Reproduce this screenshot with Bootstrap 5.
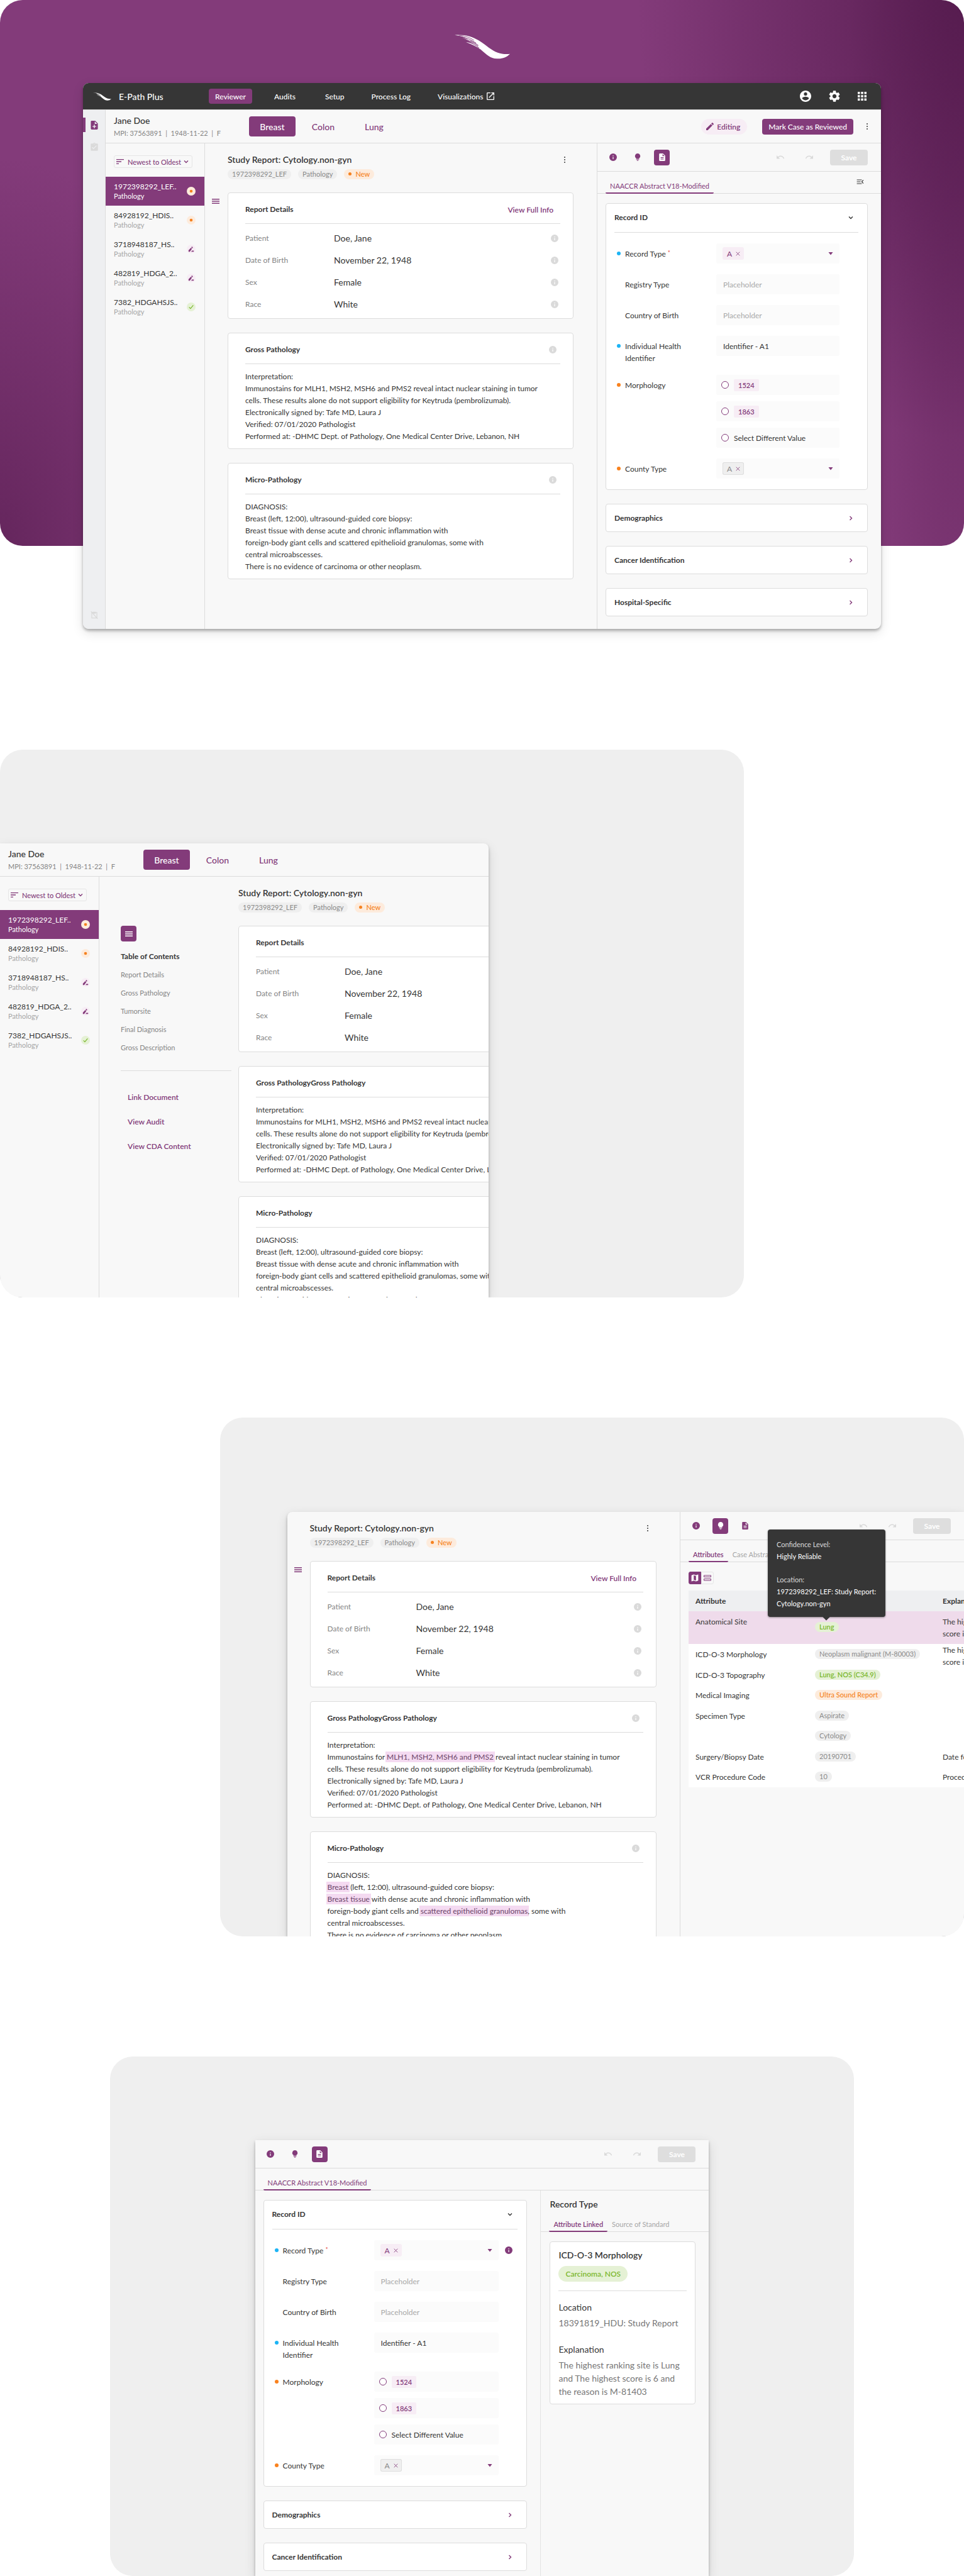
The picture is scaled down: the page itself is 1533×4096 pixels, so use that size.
<!DOCTYPE html>
<html lang="en">
<head>
<meta charset="utf-8">
<meta name="viewport" content="width=device-width, initial-scale=1">
<title>E-Path Plus</title>
<link href="https://cdn.jsdelivr.net/npm/bootstrap@5.3.0/dist/css/bootstrap.min.css" rel="stylesheet">
<style>
:root{--plum:#833b7a;--ink:#363636;--dim:#858585;--faint:#a6a6a6;--rule:#dcdcdc;--panel:#f8f8f8;--rail:#eeeff1;--blush:#f7edf5}
body{font-family:Lato,"Open Sans",sans-serif;font-size:12px;line-height:19px;color:var(--ink);background:#fff;overflow-x:hidden}
svg{fill:currentColor;display:block;flex:none}
button{font:inherit}
.i10{width:10px;height:10px}.i12{width:12px;height:12px}.i14{width:14px;height:14px}
.plum{color:var(--plum)}.dim{color:#666}.pale{color:#dadada}
.bare{background:none;border:0;padding:0;color:inherit;display:inline-flex;align-items:center;justify-content:center}

/* stages */
.hero{height:868px;padding:0 132px;border-radius:36px;background:radial-gradient(520px 700px at 100% 0,rgba(85,27,78,.9),rgba(85,27,78,0)),radial-gradient(180px 1400px at 100% 0,rgba(85,27,78,.6),rgba(85,27,78,0)),radial-gradient(350px 620px at 0 100%,#65265d,rgba(101,38,93,0)),var(--plum)}
.hero-mark{height:132px;padding-top:55px;--slit:var(--plum)}
.hero-mark svg{width:88px;height:39px}
.stage{width:77.2%;background:#efefef;border-radius:36px;overflow:hidden}
.stage-toc{margin-top:324px;height:871px;padding-top:149px}
.stage-attr{margin-top:191px;height:825px;padding:150px 0 0 107px}
.stage-link{margin-top:191px;height:826px;padding-top:133px}
.win{background:var(--panel);box-shadow:0 3px 4px rgba(0,0,0,.28),0 6px 18px rgba(0,0,0,.12)}
.win-main{border-radius:9px}
.win-toc{width:777px;height:100%;border-radius:0 8px 0 0;overflow:hidden}
.win-attr{height:100%;border-radius:8px 0 0 0}
.win-link{width:61%;height:100%}

/* top bar */
.topbar{height:42px;background:#363636;color:#fff;border-radius:9px 9px 0 0;padding:0 23px 0 16px;--slit:#363636}
.topbar .swoosh{width:29px;height:13px}
.brandname{font-size:14px;font-weight:500;margin-left:12px;width:143px}
.topnav{gap:35px}
.topnav a{color:#fff;text-decoration:none;font-weight:500;height:24px;display:flex;align-items:center;gap:6px;padding:0 4px}
.topnav a.on{background:var(--plum);border-radius:4px;padding:0 10px}

/* patient bar */
.patient{height:53px;border-bottom:1px solid var(--rule);padding:0 20px 0 13px}
.patient.first{height:54px;border-top:1px solid var(--rule)}
.who{width:215px}
.who h2{font-size:14px;font-weight:500;line-height:20px;margin:0}
.who p{font-size:11px;line-height:19px;margin:0;color:var(--dim)}
.sites{gap:7px}
.sites button{width:74px;height:32px;border:0;border-radius:4px;background:none;color:var(--plum);font-size:14px;font-weight:500}
.sites button.on{background:var(--plum);color:#fff}
.editing{height:25px;border-radius:13px;background:var(--blush);color:var(--plum);padding:0 11px 0 8px;gap:5px;font-weight:600}
.solid{height:25px;border:0;border-radius:4px;background:var(--plum);color:#fff;font-weight:500;padding:0 10px}

/* rail and study list */
.rail{width:36px;background:var(--rail);border-right:1px solid var(--rule);border-top:1px solid var(--rule);border-radius:0 0 0 9px;padding:12px 0 11px}
.rail .spot{width:100%;height:23px;display:flex;align-items:center;justify-content:center;color:#dadada;border:0;background:none;padding:0}
.rail .spot.on{color:var(--plum);border-left:4px solid var(--plum);padding-right:4px}
.studies{width:158px;border-right:1px solid var(--rule);padding-top:19px;flex:none}
.sorter{position:relative;width:125px;margin:0 0 14px 13px;color:var(--plum)}
.sorter select{appearance:none;width:100%;height:20px;border:1px solid #e6e6e6;border-radius:3px;background:transparent;color:var(--plum);font-size:11px;font-weight:500;padding:0 0 0 21px}
.sorter svg{position:absolute;top:4px;pointer-events:none}
.sorter svg:first-child{left:4px}.sorter svg:last-child{right:5px;top:5px}
.study{height:46px;padding:7px 14px 0 13px;color:var(--ink);text-decoration:none;display:flex;justify-content:space-between}
.study b{display:block;font-weight:400;line-height:17px}
.study small{display:block;font-size:11px;line-height:14px;color:var(--faint)}
.study.on{background:var(--plum);color:#fff}.study.on small{color:#fff}
.dotmark{width:14px;height:14px;border-radius:50%;margin-top:9px;display:flex;align-items:center;justify-content:center;background:#fdebdc;color:#f58220;flex:none}
.dotmark.pen{background:var(--blush);color:var(--plum)}
.dotmark.ok{background:#e5f1d5;color:#7cb82f}

/* report */
.gutter{width:36px;padding:84px 0 0 11px;flex:none}
.report{flex:1 1 0;min-width:0;padding:16px 37px 79px 0}
.report.wide{flex:0 0 586px}
.report h1{font-size:14px;font-weight:600;line-height:20px;margin:0}
.tags{gap:11px;margin:5px 0 21px}
.tag{display:inline-block;height:16px;line-height:16px;border-radius:8px;padding:0 7px;font-size:11px;background:#efefef;color:#8a8a8a;white-space:nowrap;font-weight:400}
.tag.new,.tag.warn{background:#fdebdc;color:#f58220;font-weight:500}
.tag.new::before{content:"";display:inline-block;width:5px;height:5px;border-radius:50%;background:#f58220;margin-right:6px;vertical-align:2px}
.tag.good{background:#e5f1d5;color:#7cb82f;font-weight:600}
.sheet{background:#fff;border:1px solid var(--rule);border-radius:4px;padding:0 20px 0 27px;margin-bottom:22px}
.sheet-head{height:49px;padding:4px 6px 0 0;border-bottom:1px solid var(--rule);display:flex;align-items:center;justify-content:space-between}
.sheet-head h3{font-size:12px;font-weight:700;line-height:20px;margin:0}
.sheet-head a{color:var(--plum);font-weight:600;text-decoration:none;margin-right:5px}
.facts{margin:0;padding:5px 0}
.facts div{display:flex;align-items:center;height:35px;padding-right:3px}
.facts dt{font-weight:400;width:141px;color:var(--dim)}
.facts dd{font-size:14px;margin:0;flex:1}
.prose{margin:0;padding:10px 0;white-space:nowrap}
.hl{background:#f4daf1;color:#6b4468;padding:1px 2px;margin:0 -2px}

/* contents list */
.toc{width:221px;padding:78px 11px 0 34px;flex:none}
.toc-btn{width:25px;height:25px;border:0;border-radius:4px;background:var(--plum);color:#fff;padding:0;display:flex;align-items:center;justify-content:center}
.toc h3{font-size:12px;font-weight:700;line-height:20px;margin:14px 0 4px}
.toc a{display:block;text-decoration:none;font-size:11px;line-height:29px;color:var(--dim)}
.toc hr{margin:22px 0;border:0;border-top:1px solid var(--rule);opacity:1}
.toc a.act{color:var(--plum);font-size:12px;font-weight:600;line-height:39px;padding-left:11px}

/* abstract panel */
.side{flex:0 0 452px;min-width:0;border-left:1px solid var(--rule)}
.tools{height:45px;border-bottom:1px solid var(--rule);padding:0 21px 0 12px;color:var(--plum)}
.toolset{gap:14px}
.tool{width:25px;height:25px;border:0;border-radius:4px;background:none;color:var(--plum);padding:0;display:flex;align-items:center;justify-content:center}
.tool.on{background:var(--plum);color:#fff}
.ghost{color:#dadada;width:14px;margin-right:32px}
.ghost.last{margin-right:26px}
.save{width:60px;height:25px;border:0;border-radius:4px;background:#dedede;color:#fff;font-weight:700}
.tabrow{height:35px;border-bottom:1px solid var(--rule);padding:0 27px 0 13px}
.tabrow a{height:26px;line-height:27px;padding:0 7px;margin-bottom:-1px;color:var(--faint);text-decoration:none;font-size:11px;font-weight:400;border-bottom:2px solid transparent;white-space:nowrap}
.tabrow a.on{color:var(--plum);border-color:var(--plum);border-radius:2px}
.tabrow a.strong{font-weight:600}
.forms{padding:15px 21px 0 13px}
.forms .sheet{padding:0 14px 17px 13px}
.forms .sheet-head{height:46px;padding:0 7px 1px 0}
.forms .fold{height:43px;padding:0 21px 0 13px;display:flex;align-items:center;justify-content:space-between;width:100%;font-weight:700;color:var(--ink);text-align:left}
.fields{display:flex;flex-direction:column;gap:17px;padding-top:17px}
.fieldrow{display:flex}
.fieldrow>label,.fieldrow>.lab{width:162px;flex:none;padding:7px 50px 0 17px;line-height:19px;position:relative;white-space:nowrap}
.lead-blue::before,.lead-orange::before{content:"";position:absolute;left:4px;top:13px;width:6px;height:6px;border-radius:50%;background:#1cb4f5}
.lead-orange::before{background:#f9821e}
.req{color:#e53935;font-size:10px;vertical-align:3px;line-height:1}
.ctl{flex:1;min-width:0;height:32px;background:#fbfbfb;border-radius:3px;position:relative}
.ctl input[type=text],.ctl select{width:100%;height:100%;border:0;background:transparent;padding:0 11px;font-size:12px;color:var(--ink);display:block;border-radius:3px;appearance:none}
.ctl input::placeholder{color:#a9a9a9;opacity:1}
.pick{position:absolute;left:10px;top:6px;height:20px;border-radius:3px;background:var(--blush);color:var(--plum);padding:0 6px 0 7px;display:flex;align-items:center;gap:6px}
.pick.grey{background:#efefef;color:#8a8a8a;box-shadow:inset 0 0 0 1px #dedede}
.pick svg{width:7px;height:7px;color:var(--plum)}
.caret{position:absolute;right:10px;top:12px;width:8px;height:8px;color:var(--plum);pointer-events:none}
.radios{flex:1;min-width:0;display:flex;flex-direction:column;gap:10px}
.radios label{display:flex;align-items:center;gap:8px;padding-left:8px;height:32px;background:#fbfbfb;border-radius:3px}
.radios input{appearance:none;width:12px;height:12px;border:1px solid var(--plum);border-radius:50%;margin:0;background:#fff}
.code{background:var(--blush);color:var(--plum);font-size:11px;font-weight:600;height:19px;line-height:19px;padding:0 7px;border-radius:2px}
.slot{width:30px;flex:none;display:flex;align-items:center;justify-content:flex-end;padding-right:8px;height:32px}

/* attribute table */
.viewmode{margin:15px 0 10px 13px}
.viewmode button{width:20px;height:20px;border:1px solid #e6e6e6;background:none;color:var(--plum);padding:0;display:flex;align-items:center;justify-content:center}
.viewmode .on{background:var(--plum);border-color:var(--plum);color:#fff;border-radius:3px 0 0 3px}
.viewmode button:last-child{border-radius:0 3px 3px 0}
.clipx{overflow:hidden;margin-left:13px}
.attrs{width:640px;table-layout:fixed;border-collapse:collapse;background:#fff;height:313px}
.attrs th,.attrs td{padding:0 0 0 11px;vertical-align:top;white-space:nowrap;line-height:19px}
.attrs th{height:33px;background:var(--rail);font-weight:700;line-height:33px}
.attrs td{height:32px;padding-top:7px}
.attrs td:nth-child(2),.attrs th:nth-child(2){padding-left:0}
.attrs .picked td{height:51px;background:#efdbeb}
.attrs .picked .tag{margin-top:10px}
.attrs td>.tag{vertical-align:top;margin-top:1px}
.attrs td.over{padding-top:0}
.over div{height:30px;line-height:19px}
.tip{position:absolute;left:139px;top:28px;width:187px;height:139px;background:#363636;color:#fff;border-radius:4px;padding:14px 14px 0;font-size:11px;box-shadow:0 1px 3px rgba(0,0,0,.4)}
.tip::after{content:"";position:absolute;left:89px;bottom:-4px;width:8px;height:8px;background:#363636;transform:rotate(45deg)}
.tip dl{margin:0}.tip dt{font-weight:400;color:#dadada}.tip dd{margin:0 0 18px;white-space:nowrap}

/* linked attribute */
.linked{flex:0 0 268px;border-left:1px solid #e3e3e3}
.linked h2{font-size:14px;font-weight:600;line-height:20px;margin:12px 0 0 14px}
.linked .tabrow{height:34px;padding:0 13px}
.linked .sheet{margin:15px 21px 0 14px;padding:11px 13px 9px}
.linked h3{font-size:14px;font-weight:600;line-height:20px;margin:0 0 7px}
.pill{display:inline-block;height:25px;line-height:25px;border-radius:13px;padding:0 11px;background:#e5f1d5;color:#7cb82f;font-weight:600}
.linked hr{margin:14px 0 15px;border:0;border-top:1px solid var(--rule);opacity:1}
.linked dl{margin:0;font-size:14px;line-height:21px}
.linked dt{font-weight:400;margin-bottom:4px}
.linked dd{color:#777;margin:0 0 21px}
.linked dd:last-child{margin:0}
</style>
<script src="https://cdn.jsdelivr.net/npm/bootstrap@5.3.0/dist/js/bootstrap.bundle.min.js"></script>
</head>
<body>
<svg width="0" height="0" class="position-absolute" aria-hidden="true">
<symbol id="swoosh" viewBox="0 0 298 131"><path d="M0 2C50-3 92 8 128 30C170 56 196 84 232 97C252 104 272 106 298 104C278 124 254 131 228 129C190 127 172 106 150 88C130 70 96 52 61 40C80 42 92 46 104 51C90 40 68 28 42 17C56 20 66 23 76 27C62 17 42 9 22 5Z"/><g fill="none" stroke="var(--slit)" stroke-width="3"><path d="M22 3C56 6 80 14 104 30"/><path d="M34 12C64 16 92 28 116 46"/><path d="M48 21C78 30 104 44 126 62"/><path d="M66 36C92 44 112 56 132 72"/><path d="M84 32C100 38 114 48 128 58"/></g></symbol>
<symbol id="user" viewBox="2 2 20 20"><path d="M12 2C6.480 2 2 6.480 2 12s4.480 10 10 10 10-4.480 10-10S17.520 2 12 2zm0 3c1.660 0 3 1.340 3 3s-1.340 3-3 3-3-1.340-3-3 1.340-3 3-3zm0 14.200c-2.500 0-4.710-1.280-6-3.220.030-1.990 4-3.080 6-3.080 1.990 0 5.970 1.090 6 3.080-1.290 1.940-3.500 3.220-6 3.220z"/></symbol>
<symbol id="gear" viewBox="2 2 20 20"><path d="M19.140 12.940c.04-.3.06-.61.06-.94 0-.32-.02-.64-.07-.94l2.030-1.580c.18-.14.23-.41.12-.61l-1.920-3.320c-.12-.22-.37-.29-.59-.22l-2.390.96c-.5-.38-1.030-.7-1.620-.94l-.36-2.540c-.04-.24-.24-.41-.48-.41h-3.840c-.24 0-.43.17-.47.41l-.36 2.540c-.59.24-1.130.57-1.620.94l-2.390-.96c-.22-.08-.47 0-.59.22L2.740 8.870c-.12.21-.08.47.12.61l2.030 1.580c-.05.3-.09.63-.09.94s.02.64.07.94l-2.030 1.580c-.18.14-.23.41-.12.61l1.920 3.320c.12.22.37.29.59.22l2.390-.96c.5.38 1.030.7 1.620.94l.36 2.540c.05.24.24.41.48.41h3.840c.24 0 .44-.17.47-.41l.36-2.540c.59-.24 1.130-.56 1.620-.94l2.390.96c.22.08.47 0 .59-.22l1.920-3.320c.12-.22.07-.47-.12-.61l-2.010-1.580zM12 15.600c-1.980 0-3.600-1.620-3.600-3.600s1.620-3.600 3.600-3.600 3.600 1.620 3.600 3.600-1.620 3.600-3.600 3.600z"/></symbol>
<symbol id="apps" viewBox="4 4 16 16"><path d="M4 8h4V4H4zm6 12h4v-4h-4zm-6 0h4v-4H4zm0-6h4v-4H4zm6 0h4v-4h-4zm6-10v4h4V4zm-6 4h4V4h-4zm6 6h4v-4h-4zm0 6h4v-4h-4z"/></symbol>
<symbol id="open" viewBox="3 3 18 18"><path d="M19 19H5V5h7V3H5a2 2 0 0 0-2 2v14a2 2 0 0 0 2 2h14a2 2 0 0 0 2-2v-7h-2zM14 3v2h3.600l-9.800 9.800 1.400 1.400L19 6.400V10h2V3z"/></symbol>
<symbol id="addnote" viewBox="2 2 20 20"><path d="M14 2H6a2 2 0 0 0-2 2v16a2 2 0 0 0 2 2h12a2 2 0 0 0 2-2V8zm2 14h-3v3h-2v-3H8v-2h3v-3h2v3h3zm-3-7V3.500L18.500 9z"/></symbol>
<symbol id="doc" viewBox="2 2 20 20"><path d="M14 2H6a2 2 0 0 0-2 2v16a2 2 0 0 0 2 2h12a2 2 0 0 0 2-2V8zm2 16H8v-2h8zm0-4H8v-2h8zm-3-5V3.500L18.500 9z"/></symbol>
<symbol id="task" viewBox="1 1 22 22"><path d="M19 3h-4.180C14.400 1.840 13.300 1 12 1s-2.400.84-2.820 2H5a2 2 0 0 0-2 2v14a2 2 0 0 0 2 2h14a2 2 0 0 0 2-2V5a2 2 0 0 0-2-2zm-7 0a1 1 0 1 1 0 2 1 1 0 0 1 0-2zm-2 14-4-4 1.400-1.400 2.600 2.600 6.600-6.600L18 9z"/></symbol>
<symbol id="notask" viewBox="0 0 24 24"><path d="M4 4h4V3h8v1h4v17H4zm2 3v12h11zm12 11V6h-2v2H9z"/><path d="M3 2l18 20" stroke="currentColor" stroke-width="2"/></symbol>
<symbol id="info" viewBox="2 2 20 20"><path d="M12 2a10 10 0 1 0 0 20 10 10 0 0 0 0-20zm1 15h-2v-6h2zm0-8h-2V7h2z"/></symbol>
<symbol id="bulb" viewBox="2 2 20 20"><path d="M12 2a7 7 0 0 0-4 12.700V16h8v-1.300A7 7 0 0 0 12 2z"/><path opacity=".6" d="M8 16h8v3h-2v3h-4v-3H8z"/></symbol>
<symbol id="pencil" viewBox="3 3 18 18"><path d="M3 17.250V21h3.750L17.800 9.900l-3.700-3.700zM20.700 7c.4-.4.4-1 0-1.400l-2.300-2.300c-.4-.4-1-.4-1.400 0l-1.900 1.800 3.800 3.800z"/></symbol>
<symbol id="penline" viewBox="0 0 12 12"><path d="M1 8.500V11h2.500l4-5.500-2-2zM6.200 2.700l2 2L9 3.500c.3-.5.2-.9-.2-1.200l-.8-.7c-.4-.3-.8-.2-1.100.2zM6 11l1.500-2H11v2z"/></symbol>
<symbol id="tick" viewBox="0 0 12 12"><path d="M2 6.500l2.700 2.700L10 2.800" fill="none" stroke="currentColor" stroke-width="1.500"/></symbol>
<symbol id="spot" viewBox="0 0 12 12"><circle cx="6" cy="6" r="2.800"/></symbol>
<symbol id="undo" viewBox="2 4 20 16"><path d="M12.500 8c-2.650 0-5.050 1-6.900 2.600L2 7v9h9l-3.600-3.600c1.400-1.200 3.100-1.900 5.100-1.900 3.500 0 6.500 2.300 7.600 5.500l2.400-.8C21.100 11 17.100 8 12.500 8z"/></symbol>
<symbol id="redo" viewBox="2 4 20 16"><path d="M18.400 10.600C16.500 9 14.100 8 11.500 8c-4.600 0-8.600 3-10 7.200l2.400.8c1-3.200 4-5.500 7.600-5.500 1.900 0 3.700.7 5.100 1.900L13 16h9V7z"/></symbol>
<symbol id="sort" viewBox="3 3 18 18"><path d="M3 18h6v-2H3zM3 6v2h18V6zm0 7h12v-2H3z"/></symbol>
<symbol id="bars" viewBox="0 0 12 12"><path d="M0 2h12v1.500H0zM0 5.300h12v1.500H0zM0 8.600h12v1.500H0z"/></symbol>
<symbol id="down" viewBox="0 0 10 10"><path d="M2 3.500l3 3 3-3" fill="none" stroke="currentColor" stroke-width="1.400"/></symbol>
<symbol id="right" viewBox="0 0 10 10"><path d="M3.500 2l3 3-3 3" fill="none" stroke="currentColor" stroke-width="1.400"/></symbol>
<symbol id="caret" viewBox="0 0 8 8"><path d="M0.500 2h7L4 6.500z"/></symbol>
<symbol id="x" viewBox="0 0 8 8"><path d="M.8.800l6.400 6.400M7.200.800L.8 7.200" stroke="currentColor" stroke-width="1"/></symbol>
<symbol id="dots" viewBox="0 0 4 12"><circle cx="2" cy="2" r="1"/><circle cx="2" cy="6" r="1"/><circle cx="2" cy="10" r="1"/></symbol>
<symbol id="collapse" viewBox="2 2 20 20"><path d="M3 18h13v-2H3zM3 13h10v-2H3zM3 6v2h13V6zm18 9.600L17.400 12 21 8.400 19.600 7l-5 5 5 5z"/></symbol>
<symbol id="map" viewBox="2 2 20 20"><path d="M20.500 3 15 5.100 9 3 3.400 4.900c-.2.1-.4.300-.4.500v15.100c0 .3.200.5.500.5L9 18.900l6 2.100 5.600-1.900c.2-.1.400-.3.400-.5V3.500c0-.3-.2-.5-.5-.5zM15 19l-6-2.100V5l6 2.100z"/></symbol>
<symbol id="lines" viewBox="0 0 12 12"><g fill="none" stroke="currentColor"><path d="M.5 2h11v2.500H.5zM.5 7.500h11V10H.5z"/></g></symbol>
</svg>

<section class="hero">
<div class="hero-mark d-flex justify-content-center text-white"><svg role="img" aria-label="Logo"><use href="#swoosh"/></svg></div>
<div class="win win-main">
<header class="topbar d-flex align-items-center">
<svg class="swoosh"><use href="#swoosh"/></svg><span class="brandname">E-Path Plus</span>
<nav class="topnav d-flex align-items-center flex-fill"><a class="on" href="#">Reviewer</a><a href="#" class="ps-0">Audits</a><a href="#" class="ps-2">Setup</a><a href="#">Process Log</a><a href="#">Visualizations <svg class="i12"><use href="#open"/></svg></a></nav>
<div class="d-flex align-items-center gap-4"><button class="bare" aria-label="Account"><svg width="18" height="18"><use href="#user"/></svg></button><button class="bare mx-1" aria-label="Settings"><svg width="18" height="18"><use href="#gear"/></svg></button><button class="bare" aria-label="Apps"><svg class="i14"><use href="#apps"/></svg></button></div>
</header>
<div class="d-flex">
<aside class="rail d-flex flex-column">
<button class="spot on mb-2" aria-label="Cases"><svg class="i14"><use href="#addnote"/></svg></button>
<button class="spot mt-1" aria-label="Completed"><svg class="i14"><use href="#task"/></svg></button>
<button class="spot mt-auto" aria-label="Excluded"><svg class="i14"><use href="#notask"/></svg></button>
</aside>
<div class="flex-fill">
<div class="patient first d-flex align-items-center">
<div class="who"><h2>Jane Doe</h2><p>MPI: 37563891 &nbsp;|&nbsp; 1948-11-22 &nbsp;|&nbsp; F</p></div>
<div class="sites d-flex"><button class="on">Breast</button><button>Colon</button><button>Lung</button></div>
<span class="editing d-flex align-items-center ms-auto"><svg class="i12"><use href="#pencil"/></svg>Editing</span>
<button class="solid ms-4">Mark Case as Reviewed</button>
<button class="bare dim ms-3 ps-1" aria-label="More"><svg width="4" height="12"><use href="#dots"/></svg></button>
</div>
<div class="d-flex">
<div class="studies">
<div class="sorter"><svg class="i12"><use href="#sort"/></svg><select aria-label="Sort studies"><option>Newest to Oldest</option></select><svg class="i10"><use href="#down"/></svg></div>
<a class="study on" href="#"><span><b>1972398292_LEF..</b><small>Pathology</small></span><i class="dotmark"><svg class="i10"><use href="#spot"/></svg></i></a>
<a class="study" href="#"><span><b>84928192_HDIS..</b><small>Pathology</small></span><i class="dotmark"><svg class="i10"><use href="#spot"/></svg></i></a>
<a class="study" href="#"><span><b>3718948187_HS..</b><small>Pathology</small></span><i class="dotmark pen"><svg class="i10"><use href="#penline"/></svg></i></a>
<a class="study" href="#"><span><b>482819_HDGA_2..</b><small>Pathology</small></span><i class="dotmark pen"><svg class="i10"><use href="#penline"/></svg></i></a>
<a class="study" href="#"><span><b>7382_HDGAHSJS..</b><small>Pathology</small></span><i class="dotmark ok"><svg class="i10"><use href="#tick"/></svg></i></a>
</div>
<div class="gutter plum"><button class="bare" aria-label="Contents"><svg class="i12"><use href="#bars"/></svg></button></div>
<main class="report">
<div class="d-flex justify-content-between align-items-center"><h1>Study Report: Cytology.non-gyn</h1><button class="bare dim me-2 pe-1" aria-label="More"><svg width="4" height="12"><use href="#dots"/></svg></button></div>
<div class="tags d-flex"><span class="tag">1972398292_LEF</span><span class="tag">Pathology</span><span class="tag new">New</span></div>
<section class="sheet"><div class="sheet-head"><h3>Report Details</h3><a href="#">View Full Info</a></div>
<dl class="facts">
<div><dt>Patient</dt><dd>Doe, Jane</dd><svg class="i12 pale"><use href="#info"/></svg></div>
<div><dt>Date of Birth</dt><dd>November 22, 1948</dd><svg class="i12 pale"><use href="#info"/></svg></div>
<div><dt>Sex</dt><dd>Female</dd><svg class="i12 pale"><use href="#info"/></svg></div>
<div><dt>Race</dt><dd>White</dd><svg class="i12 pale"><use href="#info"/></svg></div>
</dl></section>
<section class="sheet"><div class="sheet-head"><h3>Gross Pathology</h3><svg class="i12 pale"><use href="#info"/></svg></div>
<p class="prose">Interpretation:<br>Immunostains for MLH1, MSH2, MSH6 and PMS2 reveal intact nuclear staining in tumor<br>cells. These results alone do not support eligibility for Keytruda (pembrolizumab).<br>Electronically signed by: Tafe MD, Laura J<br>Verified: 07/01/2020 Pathologist<br>Performed at: -DHMC Dept. of Pathology, One Medical Center Drive, Lebanon, NH</p></section>
<section class="sheet mb-0"><div class="sheet-head"><h3>Micro-Pathology</h3><svg class="i12 pale"><use href="#info"/></svg></div>
<p class="prose">DIAGNOSIS:<br>Breast (left, 12:00), ultrasound-guided core biopsy:<br>Breast tissue with dense acute and chronic inflammation with<br>foreign-body giant cells and scattered epithelioid granulomas, some with<br>central microabscesses.<br>There is no evidence of carcinoma or other neoplasm.</p></section>
</main>
<div class="side">
<div class="tools d-flex align-items-center">
<div class="toolset d-flex"><button class="tool" aria-label="Info"><svg class="i12"><use href="#info"/></svg></button><button class="tool" aria-label="Insights"><svg class="i12"><use href="#bulb"/></svg></button><button class="tool on" aria-label="Abstract"><svg class="i12"><use href="#doc"/></svg></button></div>
<button class="bare ghost ms-auto" aria-label="Undo"><svg class="i12"><use href="#undo"/></svg></button><button class="bare ghost last" aria-label="Redo"><svg class="i12"><use href="#redo"/></svg></button><button class="save" disabled>Save</button>
</div>
<div class="tabrow d-flex align-items-end"><a class="on" href="#">NAACCR Abstract V18-Modified</a><button class="bare plum ms-auto mb-2 pb-1" aria-label="Collapse"><svg class="i12"><use href="#collapse"/></svg></button></div>
<div class="forms pb-3">
<section class="sheet"><div class="sheet-head"><h3>Record ID</h3><button class="bare plum" aria-label="Collapse Record ID"><svg class="i10"><use href="#down"/></svg></button></div>
<div class="fields">
<div class="fieldrow"><label for="a1" class="lead-blue">Record Type <span class="req">*</span></label><div class="ctl"><select id="a1"></select><span class="pick">A <button class="bare" aria-label="Remove A"><svg><use href="#x"/></svg></button></span><svg class="caret"><use href="#caret"/></svg></div><span class="slot"></span></div>
<div class="fieldrow"><label for="a2">Registry Type</label><div class="ctl"><input id="a2" type="text" placeholder="Placeholder"></div><span class="slot"></span></div>
<div class="fieldrow"><label for="a3">Country of Birth</label><div class="ctl"><input id="a3" type="text" placeholder="Placeholder"></div><span class="slot"></span></div>
<div class="fieldrow"><label for="a4" class="lead-blue">Individual Health<br>Identifier</label><div class="ctl"><input id="a4" type="text" value="Identifier - A1"></div><span class="slot"></span></div>
<div class="fieldrow"><span class="lab lead-orange">Morphology</span><div class="radios"><label><input type="radio" name="am"><span class="code">1524</span></label><label><input type="radio" name="am"><span class="code">1863</span></label><label><input type="radio" name="am">Select Different Value</label></div><span class="slot"></span></div>
<div class="fieldrow"><label for="a5" class="lead-orange">County Type</label><div class="ctl"><select id="a5"></select><span class="pick grey">A <button class="bare" aria-label="Remove A"><svg><use href="#x"/></svg></button></span><svg class="caret"><use href="#caret"/></svg></div><span class="slot"></span></div>
</div></section>
<section class="sheet p-0"><button class="bare fold">Demographics <svg class="i10 plum"><use href="#right"/></svg></button></section>
<section class="sheet p-0"><button class="bare fold">Cancer Identification <svg class="i10 plum"><use href="#right"/></svg></button></section>
<section class="sheet p-0 mb-1"><button class="bare fold">Hospital-Specific <svg class="i10 plum"><use href="#right"/></svg></button></section>
</div>
</div>
</div>
</div>
</div>
</div>
</section>

<section class="stage stage-toc">
<div class="win win-toc">
<div class="patient d-flex align-items-center">
<div class="who"><h2>Jane Doe</h2><p>MPI: 37563891 &nbsp;|&nbsp; 1948-11-22 &nbsp;|&nbsp; F</p></div>
<div class="sites d-flex"><button class="on">Breast</button><button>Colon</button><button>Lung</button></div>
</div>
<div class="d-flex h-100">
<div class="studies">
<div class="sorter"><svg class="i12"><use href="#sort"/></svg><select aria-label="Sort studies"><option>Newest to Oldest</option></select><svg class="i10"><use href="#down"/></svg></div>
<a class="study on" href="#"><span><b>1972398292_LEF..</b><small>Pathology</small></span><i class="dotmark"><svg class="i10"><use href="#spot"/></svg></i></a>
<a class="study" href="#"><span><b>84928192_HDIS..</b><small>Pathology</small></span><i class="dotmark"><svg class="i10"><use href="#spot"/></svg></i></a>
<a class="study" href="#"><span><b>3718948187_HS..</b><small>Pathology</small></span><i class="dotmark pen"><svg class="i10"><use href="#penline"/></svg></i></a>
<a class="study" href="#"><span><b>482819_HDGA_2..</b><small>Pathology</small></span><i class="dotmark pen"><svg class="i10"><use href="#penline"/></svg></i></a>
<a class="study" href="#"><span><b>7382_HDGAHSJS..</b><small>Pathology</small></span><i class="dotmark ok"><svg class="i10"><use href="#tick"/></svg></i></a>
</div>
<nav class="toc">
<button class="toc-btn" aria-label="Contents"><svg class="i12"><use href="#bars"/></svg></button>
<h3>Table of Contents</h3>
<a href="#">Report Details</a><a href="#">Gross Pathology</a><a href="#">Tumorsite</a><a href="#">Final Diagnosis</a><a href="#">Gross Description</a>
<hr>
<a class="act" href="#">Link Document</a><a class="act" href="#">View Audit</a><a class="act" href="#">View CDA Content</a>
</nav>
<div class="report wide">
<h1>Study Report: Cytology.non-gyn</h1>
<div class="tags d-flex"><span class="tag">1972398292_LEF</span><span class="tag">Pathology</span><span class="tag new">New</span></div>
<section class="sheet"><div class="sheet-head"><h3>Report Details</h3></div>
<dl class="facts"><div><dt>Patient</dt><dd>Doe, Jane</dd></div><div><dt>Date of Birth</dt><dd>November 22, 1948</dd></div><div><dt>Sex</dt><dd>Female</dd></div><div><dt>Race</dt><dd>White</dd></div></dl></section>
<section class="sheet"><div class="sheet-head"><h3>Gross PathologyGross Pathology</h3></div>
<p class="prose">Interpretation:<br>Immunostains for MLH1, MSH2, MSH6 and PMS2 reveal intact nuclear staining in tumor<br>cells. These results alone do not support eligibility for Keytruda (pembrolizumab).<br>Electronically signed by: Tafe MD, Laura J<br>Verified: 07/01/2020 Pathologist<br>Performed at: -DHMC Dept. of Pathology, One Medical Center Drive, Lebanon, NH</p></section>
<section class="sheet"><div class="sheet-head"><h3>Micro-Pathology</h3></div>
<p class="prose">DIAGNOSIS:<br>Breast (left, 12:00), ultrasound-guided core biopsy:<br>Breast tissue with dense acute and chronic inflammation with<br>foreign-body giant cells and scattered epithelioid granulomas, some with<br>central microabscesses.<br>There is no evidence of carcinoma or other neoplasm.</p></section>
</div>
</div>
</div>
</section>

<section class="stage stage-attr ms-auto">
<div class="win win-attr d-flex">
<div class="gutter plum"><button class="bare" aria-label="Contents"><svg class="i12"><use href="#bars"/></svg></button></div>
<div class="report">
<div class="d-flex justify-content-between align-items-center"><h1>Study Report: Cytology.non-gyn</h1><button class="bare dim me-2 pe-1" aria-label="More"><svg width="4" height="12"><use href="#dots"/></svg></button></div>
<div class="tags d-flex"><span class="tag">1972398292_LEF</span><span class="tag">Pathology</span><span class="tag new">New</span></div>
<section class="sheet"><div class="sheet-head"><h3>Report Details</h3><a href="#">View Full Info</a></div>
<dl class="facts">
<div><dt>Patient</dt><dd>Doe, Jane</dd><svg class="i12 pale"><use href="#info"/></svg></div>
<div><dt>Date of Birth</dt><dd>November 22, 1948</dd><svg class="i12 pale"><use href="#info"/></svg></div>
<div><dt>Sex</dt><dd>Female</dd><svg class="i12 pale"><use href="#info"/></svg></div>
<div><dt>Race</dt><dd>White</dd><svg class="i12 pale"><use href="#info"/></svg></div>
</dl></section>
<section class="sheet"><div class="sheet-head"><h3>Gross PathologyGross Pathology</h3><svg class="i12 pale"><use href="#info"/></svg></div>
<p class="prose">Interpretation:<br>Immunostains for <span class="hl">MLH1, MSH2, MSH6 and PMS2</span> reveal intact nuclear staining in tumor<br>cells. These results alone do not support eligibility for Keytruda (pembrolizumab).<br>Electronically signed by: Tafe MD, Laura J<br>Verified: 07/01/2020 Pathologist<br>Performed at: -DHMC Dept. of Pathology, One Medical Center Drive, Lebanon, NH</p></section>
<section class="sheet"><div class="sheet-head"><h3>Micro-Pathology</h3><svg class="i12 pale"><use href="#info"/></svg></div>
<p class="prose">DIAGNOSIS:<br><span class="hl">Breast</span> (left, 12:00), ultrasound-guided core biopsy:<br><span class="hl">Breast tissue</span> with dense acute and chronic inflammation with<br>foreign-body giant cells and <span class="hl">scattered epithelioid granulomas</span>, some with<br>central microabscesses.<br>There is no evidence of carcinoma or other neoplasm.</p></section>
</div>
<div class="side position-relative">
<div class="tools d-flex align-items-center">
<div class="toolset d-flex"><button class="tool" aria-label="Info"><svg class="i12"><use href="#info"/></svg></button><button class="tool on" aria-label="Insights"><svg class="i12"><use href="#bulb"/></svg></button><button class="tool" aria-label="Abstract"><svg class="i12"><use href="#doc"/></svg></button></div>
<button class="bare ghost ms-auto" aria-label="Undo"><svg class="i12"><use href="#undo"/></svg></button><button class="bare ghost last" aria-label="Redo"><svg class="i12"><use href="#redo"/></svg></button><button class="save" disabled>Save</button>
</div>
<div class="tabrow d-flex align-items-end"><a class="on strong" href="#">Attributes</a><a href="#">Case Abstract</a></div>
<div class="viewmode d-flex"><button class="on" aria-label="Map view"><svg class="i12"><use href="#map"/></svg></button><button aria-label="List view"><svg class="i12"><use href="#lines"/></svg></button></div>
<div class="clipx">
<table class="attrs">
<colgroup><col style="width:201px"><col style="width:192px"><col></colgroup>
<thead><tr><th>Attribute</th><th></th><th>Explanation</th></tr></thead>
<tbody>
<tr class="picked"><td>Anatomical Site</td><td><span class="tag good">Lung</span></td><td>The highest ranking site is Lung<br>score is 6 and the reason is M-81403</td></tr>
<tr><td>ICD-O-3 Morphology</td><td><span class="tag">Neoplasm malignant (M-80003)</span></td><td class="over"><div>The highest ranking site is Lung<br>score is 6 and the reason is M-81403</div></td></tr>
<tr><td>ICD-O-3 Topography</td><td><span class="tag good">Lung, NOS (C34.9)</span></td><td></td></tr>
<tr><td>Medical Imaging</td><td><span class="tag warn">Ultra Sound Report</span></td><td></td></tr>
<tr><td>Specimen Type</td><td><span class="tag">Aspirate</span></td><td></td></tr>
<tr><td></td><td><span class="tag">Cytology</span></td><td></td></tr>
<tr><td>Surgery/Biopsy Date</td><td><span class="tag">20190701</span></td><td>Date found in report</td></tr>
<tr><td>VCR Procedure Code</td><td><span class="tag">10</span></td><td>Procedure code</td></tr>
</tbody>
</table>
</div>
<div class="tip" role="tooltip"><dl><dt>Confidence Level:</dt><dd>Highly Reliable</dd><dt>Location:</dt><dd>1972398292_LEF: Study Report:<br>Cytology.non-gyn</dd></dl></div>
</div>
</div>
</section>

<section class="stage stage-link mx-auto">
<div class="win win-link mx-auto d-flex flex-column">
<div class="tools d-flex align-items-center flex-shrink-0">
<div class="toolset d-flex"><button class="tool" aria-label="Info"><svg class="i12"><use href="#info"/></svg></button><button class="tool" aria-label="Insights"><svg class="i12"><use href="#bulb"/></svg></button><button class="tool on" aria-label="Abstract"><svg class="i12"><use href="#doc"/></svg></button></div>
<button class="bare ghost ms-auto" aria-label="Undo"><svg class="i12"><use href="#undo"/></svg></button><button class="bare ghost last" aria-label="Redo"><svg class="i12"><use href="#redo"/></svg></button><button class="save" disabled>Save</button>
</div>
<div class="tabrow d-flex align-items-end flex-shrink-0"><a class="on" href="#">NAACCR Abstract V18-Modified</a></div>
<div class="d-flex flex-fill">
<div class="forms flex-fill">
<section class="sheet"><div class="sheet-head"><h3>Record ID</h3><button class="bare plum" aria-label="Collapse Record ID"><svg class="i10"><use href="#down"/></svg></button></div>
<div class="fields">
<div class="fieldrow"><label for="b1" class="lead-blue">Record Type <span class="req">*</span></label><div class="ctl"><select id="b1"></select><span class="pick">A <button class="bare" aria-label="Remove A"><svg><use href="#x"/></svg></button></span><svg class="caret"><use href="#caret"/></svg></div><span class="slot plum"><svg class="i12"><use href="#info"/></svg></span></div>
<div class="fieldrow"><label for="b2">Registry Type</label><div class="ctl"><input id="b2" type="text" placeholder="Placeholder"></div><span class="slot"></span></div>
<div class="fieldrow"><label for="b3">Country of Birth</label><div class="ctl"><input id="b3" type="text" placeholder="Placeholder"></div><span class="slot"></span></div>
<div class="fieldrow"><label for="b4" class="lead-blue">Individual Health<br>Identifier</label><div class="ctl"><input id="b4" type="text" value="Identifier - A1"></div><span class="slot"></span></div>
<div class="fieldrow"><span class="lab lead-orange">Morphology</span><div class="radios"><label><input type="radio" name="bm"><span class="code">1524</span></label><label><input type="radio" name="bm"><span class="code">1863</span></label><label><input type="radio" name="bm">Select Different Value</label></div><span class="slot"></span></div>
<div class="fieldrow"><label for="b5" class="lead-orange">County Type</label><div class="ctl"><select id="b5"></select><span class="pick grey">A <button class="bare" aria-label="Remove A"><svg><use href="#x"/></svg></button></span><svg class="caret"><use href="#caret"/></svg></div><span class="slot"></span></div>
</div></section>
<section class="sheet p-0"><button class="bare fold">Demographics <svg class="i10 plum"><use href="#right"/></svg></button></section>
<section class="sheet p-0 mb-0"><button class="bare fold">Cancer Identification <svg class="i10 plum"><use href="#right"/></svg></button></section>
</div>
<aside class="linked">
<h2>Record Type</h2>
<div class="tabrow d-flex align-items-end"><a class="on strong" href="#">Attribute Linked</a><a href="#">Source of Standard</a></div>
<section class="sheet"><h3>ICD-O-3 Morphology</h3><span class="pill">Carcinoma, NOS</span><hr>
<dl><dt>Location</dt><dd>18391819_HDU: Study Report</dd><dt>Explanation</dt><dd>The highest ranking site is Lung and The highest score is 6 and the reason is M-81403</dd></dl></section>
</aside>
</div>
</div>
</section>
</body>
</html>
